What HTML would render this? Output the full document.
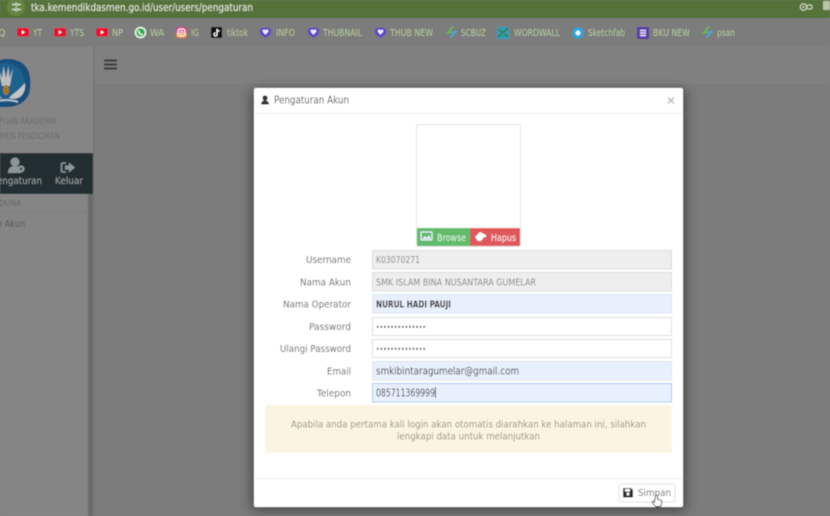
<!DOCTYPE html>
<html><head><meta charset="utf-8"><style>
html,body{margin:0;padding:0;background:#7b7b7b;width:830px;height:516px;overflow:hidden}
svg{display:block}
text{font-family:"DejaVu Sans","Liberation Sans",sans-serif}
.bm{font-size:9.5px;fill:#b8c9a0}
.lb{font-size:10px;fill:#5f5f5f}
.iv{font-size:9.5px}
</style></head><body>
<svg width="830" height="516" viewBox="0 0 830 516" xmlns="http://www.w3.org/2000/svg">
<defs>
<filter id="b" x="-5%" y="-5%" width="110%" height="110%"><feGaussianBlur stdDeviation="0.45"/></filter>
<filter id="s" x="-10%" y="-10%" width="120%" height="120%"><feGaussianBlur stdDeviation="6"/></filter>
<g id="yt"><rect x="0" y="0" width="12" height="8.500" rx="2" fill="#e8112b"/><path d="M4.800 2.200L8 4.200L4.800 6.200Z" fill="#fff"/></g>
<g id="sh"><path d="M1 2Q5.500 0 10 2Q11.500 3 11 6Q10 9 7 10L5.500 12L4 10Q1 9 0 6Q-.5 3 1 2Z" fill="#5b45c9"/><path d="M5.500 8.200L2.800 5.300Q2.200 3.300 4 3Q5 3 5.500 4Q6 3 7 3Q8.800 3.300 8.200 5.300Z" fill="#eef0ff"/></g>
<g id="sc"><path d="M7 0L2 6H5.500" fill="none" stroke="#5fb84f" stroke-width="2"/><path d="M4.500 11L9.500 5.500H6" fill="none" stroke="#4ba6c9" stroke-width="2"/></g>
</defs>
<g filter="url(#b)">
<!-- page -->
<rect width="830" height="516" fill="#7b7b7b"/>
<rect x="94" y="47" width="736" height="37" fill="#808080"/>
<rect x="0" y="47" width="94" height="469" fill="#858585"/>
<rect x="93" y="47" width="2" height="469" fill="#777"/>
<!-- browser -->
<rect width="830" height="18" fill="#57723a"/>
<circle cx="16" cy="7" r="9" fill="#668442"/>
<path d="M12 4.500h2.500M18.500 4.500h2.500M12 9.500h2.500M18.500 9.500h2.500" stroke="#dfe6d2" stroke-width="1.200"/>
<circle cx="16.500" cy="4.500" r="1.300" fill="none" stroke="#dfe6d2"/><circle cx="16.500" cy="9.500" r="1.300" fill="none" stroke="#dfe6d2"/>
<text x="31" y="11" font-size="11" fill="#e4ead9" textLength="222" lengthAdjust="spacingAndGlyphs">tka.kemendikdasmen.go.id/user/users/pengaturan</text>
<circle cx="803.500" cy="7" r="3.200" fill="none" stroke="#cdd6bd" stroke-width="1.100"/><circle cx="803.500" cy="7" r="1" fill="#cdd6bd"/>
<rect x="807" y="5" width="5" height="4" rx="1.500" fill="none" stroke="#cdd6bd"/>
<rect x="823" y="1" width="7" height="9" rx="1" fill="#b8c4a5"/>
<!-- bookmarks -->
<text x="-2" y="36" class="bm" textLength="6">Q</text>
<use href="#yt" x="17" y="28"/><text x="33" y="36" class="bm" textLength="9" lengthAdjust="spacingAndGlyphs">YT</text>
<use href="#yt" x="54" y="28"/><text x="70" y="36" class="bm" textLength="14" lengthAdjust="spacingAndGlyphs">YTS</text>
<use href="#yt" x="96" y="28"/><text x="112" y="36" class="bm" textLength="11" lengthAdjust="spacingAndGlyphs">NP</text>
<circle cx="140.500" cy="32.500" r="5.800" fill="#e9f7ec"/><circle cx="140.500" cy="32.500" r="4.300" fill="#2fb04c"/><path d="M138.500 30.500q0 3.500 4 4.200" fill="none" stroke="#fff" stroke-width="1.300"/>
<text x="150" y="36" class="bm" textLength="14" lengthAdjust="spacingAndGlyphs">WA</text>
<rect x="176" y="27" width="11" height="11" rx="3" fill="#d8388a"/><path d="M176 35v-2h11v2q0 3-3 3h-5q-3 0-3-3" fill="#f0913a"/><rect x="178" y="29" width="7" height="7" rx="2" fill="none" stroke="#fff"/><circle cx="181.500" cy="32.500" r="1.500" fill="none" stroke="#fff" stroke-width=".8"/>
<text x="191" y="36" class="bm" textLength="8" lengthAdjust="spacingAndGlyphs">IG</text>
<rect x="211" y="27" width="11" height="11" rx="1" fill="#0a0a0a"/><path d="M217 29v5.500a1.500 1.500 0 1 1-1.500-1.500M217 29q.5 2 2.500 2.200" fill="none" stroke="#fff" stroke-width="1.100"/>
<text x="227" y="36" class="bm" textLength="21" lengthAdjust="spacingAndGlyphs">tiktok</text>
<use href="#sh" x="260" y="26.500"/><text x="276" y="36" class="bm" textLength="19" lengthAdjust="spacingAndGlyphs">INFO</text>
<use href="#sh" x="308" y="26.500"/><text x="323" y="36" class="bm" textLength="39" lengthAdjust="spacingAndGlyphs">THUBNAIL</text>
<use href="#sh" x="375" y="26.500"/><text x="390" y="36" class="bm" textLength="43" lengthAdjust="spacingAndGlyphs">THUB NEW</text>
<use href="#sc" x="446" y="26.500"/><text x="461" y="36" class="bm" textLength="25" lengthAdjust="spacingAndGlyphs">SCBUZ</text>
<rect x="497" y="27" width="12" height="12" fill="#2c9fb8"/><path d="M498 37L508 28M498 29L503 33M504 34L508 37" stroke="#3e7a4a" stroke-width="1.600"/>
<text x="514" y="36" class="bm" textLength="46" lengthAdjust="spacingAndGlyphs">WORDWALL</text>
<circle cx="578" cy="33" r="5.800" fill="#2aa3d6"/><circle cx="578" cy="33" r="2.500" fill="#e6f4fa"/>
<text x="588" y="36" class="bm" textLength="37" lengthAdjust="spacingAndGlyphs">Sketchfab</text>
<rect x="637" y="27" width="12" height="12" rx="1" fill="#5a3ba8"/><path d="M640 30.500h6M640 33h6M640 35.500h6" stroke="#e8e4f5" stroke-width="1.500"/>
<text x="653" y="36" class="bm" textLength="37" lengthAdjust="spacingAndGlyphs">BKU NEW</text>
<use href="#sc" x="702" y="26.500"/><text x="717" y="36" class="bm" textLength="18" lengthAdjust="spacingAndGlyphs">psan</text>
<!-- hamburger -->
<path d="M104 60.500h13M104 64.500h13M104 68.500h13" stroke="#3c3c3c" stroke-width="2.200"/>
<!-- sidebar logo -->
<path d="M-14 70Q-4 58 10 59Q24 60 29 72Q32 84 29 94Q24 106 8 107Q-8 108-14 100Z" fill="#17507a"/>
<circle cx="5" cy="83" r="20" fill="#1f628f"/>
<path d="M-2 68L2 86H10L13 68L9.500 78L8.500 66L6 78L3.500 66L2 78Z" fill="#bdbdbd"/>
<ellipse cx="6" cy="90" rx="3" ry="5" fill="#a8741d"/>
<path d="M13 94Q19 90 25 83Q26 92 20 97Q14 100 9 98Z" fill="#c4c4c4"/>
<path d="M-6 92Q-2 96 2 98L-6 99Z" fill="#c4c4c4"/>
<path d="M-6 102Q6 98 18 102" fill="none" stroke="#cfcfcf" stroke-width="1.500"/>
<text x="-1" y="124" font-size="8.500" fill="#6b6b6b" textLength="58" lengthAdjust="spacingAndGlyphs">PUAN AKADEMIK</text>
<text x="0" y="139" font-size="8.500" fill="#6b6b6b" textLength="60" lengthAdjust="spacingAndGlyphs">MEN PENDIDIKAN</text>
<rect x="0" y="153" width="93" height="41" fill="#222d33"/>
<circle cx="15" cy="162" r="4.500" fill="#8d9599"/><path d="M8 173q0-7 7-7q5 0 7 3l-1 4z" fill="#8d9599"/><circle cx="21" cy="169" r="3.500" fill="#8d9599"/><circle cx="21" cy="169" r="1.200" fill="#222d33"/>
<path d="M66 163h-3q-1.500 0-1.500 1.500v6q0 1.500 1.500 1.500h3" fill="none" stroke="#8d9599" stroke-width="1.500"/><path d="M65 165.500h4v-3l6 5-6 5v-3h-4z" fill="#8d9599"/>
<text x="-3" y="184" font-size="10" fill="#959da1" textLength="45" lengthAdjust="spacingAndGlyphs">engaturan</text>
<text x="55" y="184" font-size="10" fill="#959da1" textLength="28" lengthAdjust="spacingAndGlyphs">Keluar</text>
<rect x="88" y="194" width="5" height="322" fill="#6a6a6a"/>
<text x="-1" y="206" font-size="8" fill="#646464" textLength="22" lengthAdjust="spacingAndGlyphs">DUNA</text>
<rect x="0" y="211" width="88" height="1" fill="#7f7f7f"/>
<text x="-3" y="227" font-size="10" fill="#555" textLength="28" lengthAdjust="spacingAndGlyphs">n Akun</text>
<!-- modal -->
<rect x="252" y="90" width="433" height="420" fill="#000" opacity=".45" filter="url(#s)"/>
<rect x="254" y="88" width="429" height="419" rx="2" fill="#fff"/>
<circle cx="265" cy="98" r="2.600" fill="#333"/><path d="M261 104.500q0-4 4-4t4 4z" fill="#333"/>
<text x="274" y="103.500" font-size="10.500" fill="#555" textLength="75" lengthAdjust="spacingAndGlyphs">Pengaturan Akun</text>
<path d="M668 97.500l6 6m0-6l-6 6" stroke="#c4c4c4" stroke-width="1.700"/>
<rect x="255" y="113" width="427" height="1" fill="#f0f0f0"/>
<!-- photo -->
<rect x="416.500" y="124.500" width="104" height="122" rx="2" fill="#fff" stroke="#e3e3e3"/>
<rect x="417" y="228" width="53" height="18" fill="#61bb6b"/>
<rect x="470" y="228" width="50" height="18" fill="#e0585c"/>
<rect x="421" y="232" width="11" height="8" rx="1" fill="none" stroke="#eef" stroke-width="1.300"/><path d="M422 239l3-3 2 2 2-3 2 4z" fill="#eef"/>
<text x="437" y="241" font-size="9.500" fill="#e6f5e6" textLength="29" lengthAdjust="spacingAndGlyphs">Browse</text>
<path d="M475 237l5-5 6 3v2h-2l-3 4h-3z" fill="#fff"/>
<text x="491" y="241" font-size="9.500" fill="#fdecec" textLength="25" lengthAdjust="spacingAndGlyphs">Hapus</text>
<!-- labels -->
<text x="351" y="263" class="lb" text-anchor="end" textLength="45" lengthAdjust="spacingAndGlyphs">Username</text>
<text x="351" y="285.500" class="lb" text-anchor="end" textLength="51" lengthAdjust="spacingAndGlyphs">Nama Akun</text>
<text x="351" y="307.500" class="lb" text-anchor="end" textLength="68" lengthAdjust="spacingAndGlyphs">Nama Operator</text>
<text x="351" y="330" class="lb" text-anchor="end" textLength="42" lengthAdjust="spacingAndGlyphs">Password</text>
<text x="351" y="352" class="lb" text-anchor="end" textLength="71" lengthAdjust="spacingAndGlyphs">Ulangi Password</text>
<text x="351" y="374.500" class="lb" text-anchor="end" textLength="24" lengthAdjust="spacingAndGlyphs">Email</text>
<text x="351" y="396.500" class="lb" text-anchor="end" textLength="34" lengthAdjust="spacingAndGlyphs">Telepon</text>
<!-- inputs -->
<rect x="372.500" y="250.500" width="299" height="18.500" fill="#eeeeee" stroke="#dcdcdc"/>
<rect x="372.500" y="272.500" width="299" height="18.500" fill="#eeeeee" stroke="#dcdcdc"/>
<rect x="372.500" y="294.500" width="299" height="18.500" fill="#e9f0fd" stroke="#dfe5ee"/>
<rect x="372.500" y="317.500" width="299" height="18" fill="#fff" stroke="#dedede"/>
<rect x="372.500" y="339.500" width="299" height="18" fill="#fff" stroke="#dedede"/>
<rect x="372.500" y="361.500" width="299" height="18.500" fill="#e9f0fd" stroke="#dfe5ee"/>
<rect x="372.500" y="383.500" width="299" height="18.500" fill="#e9f0fd" stroke="#a9c9ee"/>
<text x="376" y="263" class="iv" fill="#858585" textLength="44" lengthAdjust="spacingAndGlyphs">K03070271</text>
<text x="376" y="285.500" class="iv" fill="#858585" textLength="160" lengthAdjust="spacingAndGlyphs">SMK ISLAM BINA NUSANTARA GUMELAR</text>
<text x="376" y="307.500" class="iv" fill="#2c2c2c" font-weight="bold" textLength="75" lengthAdjust="spacingAndGlyphs">NURUL HADI PAUJI</text>
<text x="376" y="330" font-size="8" fill="#444" textLength="50" lengthAdjust="spacingAndGlyphs">••••••••••••••</text>
<text x="376" y="352" font-size="8" fill="#444" textLength="50" lengthAdjust="spacingAndGlyphs">••••••••••••••</text>
<text x="376" y="374.500" font-size="10.500" fill="#3c3c3c" textLength="143" lengthAdjust="spacingAndGlyphs">smkibintaragumelar@gmail.com</text>
<text x="376" y="396.500" font-size="10.500" fill="#3c3c3c" textLength="59" lengthAdjust="spacingAndGlyphs">085711369999</text>
<rect x="435" y="387" width="1" height="11" fill="#333"/>
<!-- alert -->
<rect x="265" y="405" width="407" height="48" rx="2" fill="#faf5e2"/>
<text x="468.500" y="427.500" font-size="10" fill="#9a9278" text-anchor="middle" textLength="355" lengthAdjust="spacingAndGlyphs">Apabila anda pertama kali login akan otomatis diarahkan ke halaman ini, silahkan</text>
<text x="468.500" y="439.500" font-size="10" fill="#9a9278" text-anchor="middle" textLength="143" lengthAdjust="spacingAndGlyphs">lengkapi data untuk melanjutkan</text>
<!-- footer -->
<rect x="255" y="478" width="427" height="1" fill="#f0f0f0"/>
<rect x="619" y="484" width="56" height="18" rx="2" fill="#fff" stroke="#e2e2e2"/>
<path d="M623 488h8l2 2v7.500h-10z" fill="#2c2c2c"/><rect x="625" y="489" width="5" height="2.500" fill="#fff"/><circle cx="628" cy="494" r="1.500" fill="#fff"/>
<text x="638" y="496" font-size="10" fill="#6a6a6a" textLength="33" lengthAdjust="spacingAndGlyphs">Simpan</text>
<path d="M655.500 495.500q1.200-1 2 .3v3.500l3 .7q1.500.5 1.300 2l-.8 3.500q-.3 1-1.500 1h-3q-1 0-1.800-1l-2.200-3q-.5-1 .5-1.300l1.500.8z" fill="#fff" stroke="#333" stroke-width=".9"/>
</g>
</svg>
</body></html>
